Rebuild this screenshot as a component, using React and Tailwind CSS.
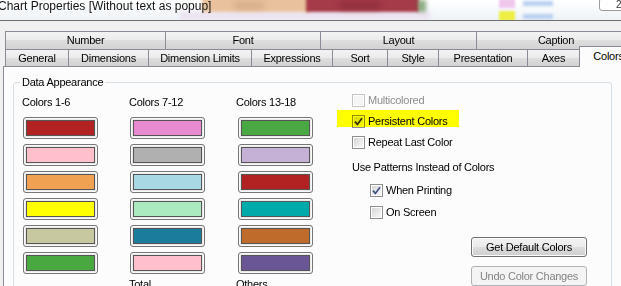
import React from "react";

const topTabs = [
  { label: "Number", w: "w-[160px]" },
  { label: "Font", w: "w-[155px]" },
  { label: "Layout", w: "w-[156px]" },
  { label: "Caption", w: "w-[160px]" },
];

const bottomTabs = [
  { label: "General", w: "w-[63px]" },
  { label: "Dimensions", w: "w-[80px]" },
  { label: "Dimension Limits", w: "w-[103px]" },
  { label: "Expressions", w: "w-[81px]" },
  { label: "Sort", w: "w-[55px]" },
  { label: "Style", w: "w-[51px]" },
  { label: "Presentation", w: "w-[89px]" },
  { label: "Axes", w: "w-[52px]" },
];

const columns = [
  {
    title: "Colors 1-6",
    inset: "ml-[1px]",
    footer: "",
    colors: ["#b22222", "#ffc0cb", "#f0a152", "#ffff00", "#c8c8a0", "#4aa840"],
  },
  {
    title: "Colors 7-12",
    inset: "ml-[1px]",
    footer: "Total",
    colors: ["#e88acf", "#b0b0b0", "#a8d8e4", "#aaeabe", "#1c7c9c", "#ffc0cb"],
  },
  {
    title: "Colors 13-18",
    inset: "ml-[2px]",
    footer: "Others",
    colors: ["#4aa843", "#c4b1d5", "#b22222", "#00a9aa", "#bf6b2b", "#6a5595"],
  },
];

const tabBg =
  "bg-[linear-gradient(#f3f3f3_0%,#ebebeb_50%,#dedede_50%,#d2d2d2_100%)]";

function TitleBar() {
  return (
    <div className="relative h-[21px] shrink-0 overflow-hidden border-b border-[#6f6f6f] bg-gradient-to-b from-white to-[#eef3f8]">
      {/* blurred window content behind the glass */}
      <div className="absolute left-[180px] top-[12px] w-[250px] h-[8px] bg-[#ece2f1] blur-[2px]" />
      <div className="absolute left-[202px] top-[-3px] w-[108px] h-[15px] bg-[#e9c29d] blur-[1.5px]" />
      <div className="absolute left-[234px] top-[2px] w-[30px] h-[7px] bg-[#c49c7c] opacity-60 blur-[3px]" />
      <div className="absolute left-[306px] top-[-3px] w-[113px] h-[15px] bg-[#a53a48] blur-[1.5px]" />
      <div className="absolute left-[340px] top-[2px] w-[40px] h-[7px] bg-[#7a2634] opacity-50 blur-[3px]" />
      <div className="absolute left-[418px] top-[0px] w-[8px] h-[12px] bg-[#5a8a4a] opacity-70 blur-[2px]" />
      <div className="absolute left-[499px] top-[-1px] w-[16px] h-[9px] bg-[#f0c8ee] blur-[1px]" />
      <div className="absolute left-[499px] top-[11px] w-[16px] h-[10px] bg-[#eeee44] blur-[1px]" />
      <div className="absolute left-[523px] top-[1px] w-[30px] h-[5px] bg-[#b8d0f0] blur-[1.5px]" />
      <div className="absolute left-[523px] top-[14px] w-[30px] h-[5px] bg-[#b8d0f0] blur-[1.5px]" />
      <div className="absolute left-[599px] top-[-2px] w-[30px] h-[13px] rounded-[3px] border border-[#9a9a9a] bg-white">
        <span className="absolute left-[16px] top-[1px] text-[10px] leading-[10px] text-[#333]">2</span>
      </div>

      <span className="relative block ml-[-2px] text-[12px] leading-[12px] tracking-normal text-[#141414] whitespace-nowrap">
        Chart Properties [Without text as popup]
      </span>
    </div>
  );
}

function Check({ checked, disabled, tint, blend }) {
  return (
    <span
      className={`flex w-[13px] h-[13px] shrink-0 p-[1px] border bg-white ${
        disabled ? "border-[#c5c5c5]" : "border-[#8e8f8f]"
      } ${blend ? "mix-blend-multiply" : ""}`}
    >
      <span
        className={`flex flex-1 items-center justify-center ${
          disabled
            ? "bg-[#f4f4f4]"
            : "bg-gradient-to-br from-[#d6d6d6] to-[#f9f9f9]"
        }`}
      >
        {checked && (
          <svg width="9" height="9" viewBox="0 0 9 9">
            <path
              d="M1 4.6 L3.4 7.4 L8 1.2"
              fill="none"
              stroke={tint}
              strokeWidth="1.7"
            />
          </svg>
        )}
      </span>
    </span>
  );
}

function ColorButton({ color }) {
  return (
    <div className="w-[75px] h-[22px] p-[2px] rounded-[3px] border border-[#767676] bg-[#e9e9e9] shadow-[inset_0_0_0_1px_#fafafa]">
      <div
        className="w-full h-full border border-[#555]"
        style={{ backgroundColor: color }}
      />
    </div>
  );
}

export default function App() {
  return (
    <div className="w-[621px] h-[286px] overflow-hidden flex flex-col bg-[#f0f0f0] text-black text-[11px] tracking-[-0.25px] font-['Liberation_Sans',Arial,sans-serif]">
      <TitleBar />

      <div className="mt-[10px] flex flex-col flex-1 min-h-0">
        {/* Tabs, upper row */}
        <div className="flex h-[18px] pl-[5px] shrink-0">
          {topTabs.map((t, i) => (
            <div
              key={t.label}
              className={`${t.w} shrink-0 flex items-center justify-center border-t border-l border-[#898c95] ${tabBg} ${
                i === topTabs.length - 1 ? "border-r" : ""
              }`}
            >
              {t.label}
            </div>
          ))}
        </div>

        {/* Tabs, lower row */}
        <div className="flex h-[17px] pl-[5px] items-end shrink-0">
          {bottomTabs.map((t) => (
            <div
              key={t.label}
              className={`${t.w} h-full shrink-0 flex items-center justify-center border-t border-l border-[#898c95] ${tabBg}`}
            >
              {t.label}
            </div>
          ))}
          <div className="relative z-10 w-[59px] h-[21px] -mb-px shrink-0 flex items-center justify-center pb-[2px] border-t border-l border-r border-[#898c95] bg-[#fcfcfc]">
            Colors
          </div>
        </div>

        {/* Page */}
        <div className="flex-1 ml-[3px] pl-[9px] pt-[9px] border-t border-l border-[#898c95] bg-[#fcfcfc]">
          <fieldset className="w-[599px] h-[260px] border border-[#d5dfe5] rounded-[3px]">
            <legend className="ml-[6px] px-[2px] leading-[13px]">Data Appearance</legend>

            <div className="flex pl-[8px]">
              {/* swatch columns */}
              <div className="flex">
                {columns.map((c, i) => (
                  <div
                    key={c.title}
                    className={`flex flex-col ${i === 2 ? "w-[101px]" : "w-[107px]"}`}
                  >
                    <div className="mt-[7px] leading-[13px] whitespace-nowrap">{c.title}</div>
                    <div className={`mt-[8px] flex flex-col gap-[5px] ${c.inset}`}>
                      {c.colors.map((col, j) => (
                        <ColorButton key={j} color={col} />
                      ))}
                    </div>
                    <div className="mt-[4px] h-[13px] leading-[13px]">{c.footer}</div>
                  </div>
                ))}
              </div>

              {/* options */}
              <div className="flex flex-col">
                <div className="mt-[5px] pl-[15px] flex items-center gap-[3px] h-[13px]">
                  <Check disabled />
                  <span className="leading-[13px] text-[#8d8d8d]">Multicolored</span>
                </div>

                <div className="mt-[3px] w-[122px] h-[17px] pt-[5px] pl-[15px] bg-[#ffff00]">
                  <div className="flex items-center gap-[3px] h-[13px]">
                    <Check checked tint="#2e2e2e" blend />
                    <span className="leading-[13px]">Persistent Colors</span>
                  </div>
                </div>

                <div className="mt-[9px] pl-[15px] flex items-center gap-[3px] h-[13px]">
                  <Check />
                  <span className="leading-[13px]">Repeat Last Color</span>
                </div>

                <div className="mt-[12px] pl-[15px] h-[13px] leading-[13px] whitespace-nowrap">
                  Use Patterns Instead of Colors
                </div>

                <div className="mt-[10px] pl-[33px] flex items-center gap-[3px] h-[13px]">
                  <Check checked tint="#3f5385" />
                  <span className="leading-[13px]">When Printing</span>
                </div>

                <div className="mt-[9px] pl-[33px] flex items-center gap-[3px] h-[13px]">
                  <Check />
                  <span className="leading-[13px]">On Screen</span>
                </div>

                <button className="mt-[18px] ml-[134px] w-[116px] h-[20px] flex items-center justify-center rounded-[3px] border border-[#707070] bg-[linear-gradient(#f2f2f2_0%,#ebebeb_50%,#dddddd_50%,#cfcfcf_100%)] shadow-[inset_0_0_0_1px_#fbfbfb]">
                  Get Default Colors
                </button>
                <button className="mt-[9px] ml-[134px] w-[116px] h-[20px] flex items-center justify-center rounded-[3px] border border-[#adb2b5] bg-[#f4f4f4] text-[#838383]">
                  Undo Color Changes
                </button>
              </div>
            </div>
          </fieldset>
        </div>
      </div>
    </div>
  );
}
